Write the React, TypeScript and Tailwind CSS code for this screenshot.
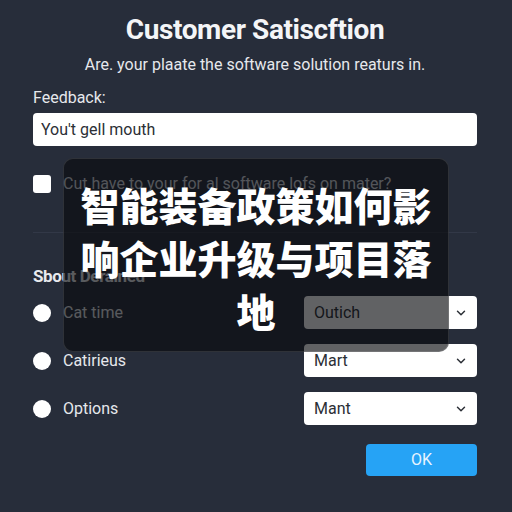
import { ChevronDown } from 'lucide-react';

const rows = [
  { label: 'Cat time', value: 'Outich' },
  { label: 'Catirieus', value: 'Mart' },
  { label: 'Options', value: 'Mant' },
];

export default function App() {
  return (
    <div
      className="relative w-[512px] h-[512px] overflow-hidden bg-[#272d3a] text-white"
      style={{ fontFamily: 'Roboto, "Noto Sans", sans-serif' }}
    >
      <div className="flex flex-col pl-[33px] pr-[35px] pt-[13px]">
        <h1 className="text-center text-[28px] leading-[34px] font-bold text-[#f4f5f7] tracking-[-0.4px]">
          Customer Satiscftion
        </h1>
        <p className="mt-[8px] text-center text-[16px] leading-[20px] text-[#e6e8ec]">
          Are. your plaate the software solution reaturs in.
        </p>
        <label className="mt-[13px] text-[16px] leading-[20px] text-[#e6e8ec]">Feedback:</label>
        <div className="mt-[5px] h-[33px] rounded-[4px] bg-white flex items-center px-[8px] text-[16px] text-[#2b2f36]">
          You't gell mouth
        </div>

        <div className="mt-[26px] flex items-center gap-[12px]">
          <div className="w-[18px] h-[18px] rounded-[3px] bg-white" />
          <span className="text-[16px] text-[#d7dae0]">Cut have to your for al software lofs on mater?</span>
        </div>

        <div className="mt-[36px] h-px bg-[#323847]" />

        <h2 className="mt-[33px] text-[17px] leading-[20px] font-bold text-[#e8eaee] tracking-[-0.4px]">
          Sbout Derained
        </h2>

        <div className="mt-[10px] flex flex-col gap-[15px]">
          {rows.map((r) => (
            <div key={r.label} className="flex items-center justify-between">
              <div className="flex items-center gap-[12px]">
                <div className="w-[18px] h-[18px] rounded-full bg-white" />
                <span className="text-[16px] text-[#e6e8ec]">{r.label}</span>
              </div>
              <div className="w-[173px] h-[33px] rounded-[4px] bg-white flex items-center justify-between pl-[10px] pr-[9px]">
                <span className="text-[16px] text-[#2b2f36]">{r.value}</span>
                <ChevronDown className="size-[14px] text-[#2b2f36]" strokeWidth={2.5} />
              </div>
            </div>
          ))}
        </div>

        <div className="mt-[19px] flex justify-end">
          <button className="w-[111px] h-[32px] rounded-[4px] bg-[#26a3f5] text-[16px] text-[#e8f4ff]">
            OK
          </button>
        </div>
      </div>

      <div className="absolute left-[63px] top-[158px] w-[386px] h-[194px] rounded-[10px] border border-[rgba(255,255,255,0.12)] bg-[rgba(8,9,12,0.64)] flex items-center justify-center px-[10px] pt-[4px]">
        <p
          className="text-center text-[39px] leading-[53px] font-black text-white"
          style={{ fontFamily: '"Noto Sans CJK SC", sans-serif' }}
        >
          智能装备政策如何影响企业升级与项目落地
        </p>
      </div>
    </div>
  );
}
